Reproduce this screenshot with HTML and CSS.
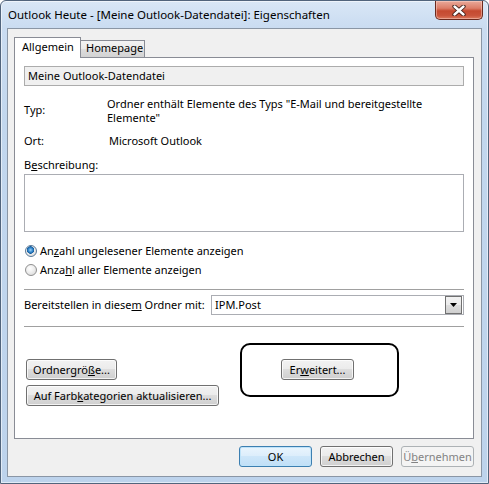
FILE: index.html
```html
<!DOCTYPE html>
<html lang="de">
<head>
<meta charset="utf-8">
<title>Outlook Heute - Eigenschaften</title>
<link rel="stylesheet" href="styles.css">
</head>
<body>
<div class="window">
  <div class="titlebar">
    <div class="title">Outlook Heute - [Meine Outlook-Datendatei]: Eigenschaften</div>
    <div class="close">
      <svg width="14" height="11" viewBox="0 0 14 11">
        <path d="M2.5 1.5 L11.5 9.5 M11.5 1.5 L2.5 9.5" stroke="#3a1a14" stroke-width="4.2" stroke-linecap="round"/>
        <path d="M2.5 1.5 L11.5 9.5 M11.5 1.5 L2.5 9.5" stroke="#ffffff" stroke-width="2.4" stroke-linecap="round"/>
      </svg>
    </div>
  </div>
  <div class="client">
    <div class="tabs">
      <div class="tab active">Allgemein</div>
      <div class="tab inactive">Homepage</div>
    </div>
    <div class="panel">
      <div class="namefield">Meine Outlook-Datendatei</div>
      <div class="inforow typ-row">
        <div class="lbl lbl-typ">Typ:</div>
        <div class="val">Ordner enthält Elemente des Typs "E-Mail und bereitgestellte<br>Elemente"</div>
      </div>
      <div class="inforow ort-row">
        <div class="lbl">Ort:</div>
        <div class="val val-ort">Microsoft Outlook</div>
      </div>
      <div class="desc-label">B<u>e</u>schreibung:</div>
      <div class="textarea"></div>
      <div class="radio-row first"><span class="radio checked"></span>An<u>z</u>ahl ungelesener Elemente anzeigen</div>
      <div class="radio-row second"><span class="radio"></span>Anza<u>h</u>l aller Elemente anzeigen</div>
      <div class="sep sep-1"></div>
      <div class="combo-row">
        <div class="combo-label">Bereitstellen in diese<u>m</u> Ordner mit:</div>
        <div class="combo">
          <span class="combo-text">IPM.Post</span>
          <span class="combo-btn">
            <svg width="7" height="4" viewBox="0 0 7 4"><polygon points="0,0 7,0 3.5,4" fill="#000"/></svg>
          </span>
        </div>
      </div>
      <div class="sep sep-2"></div>
      <div class="actions">
        <div class="action-col">
          <div class="btn btn-size">Ordnergrö<u>ß</u>e...</div>
          <div class="btn btn-color">Auf Farb<u>k</u>ategorien aktualisieren...</div>
        </div>
        <div class="highlight">
          <div class="btn btn-adv">Er<u>w</u>eitert...</div>
        </div>
      </div>
    </div>
    <div class="footer">
      <div class="btn btn-foot default">OK</div>
      <div class="btn btn-foot">Abbrechen</div>
      <div class="btn btn-foot disabled">Ü<u>b</u>ernehmen</div>
    </div>
  </div>
</div>
</body>
</html>
```

FILE: styles.css
```css
* { box-sizing: border-box; }
html, body { margin: 0; padding: 0; }
body {
  width: 489px;
  height: 484px;
  overflow: hidden;
  background: #ffffff;
  font-family: "Noto Sans", "Open Sans", "DejaVu Sans", sans-serif;
  font-size: 11px;
  line-height: 14px;
  color: #000;
}
u { text-decoration: underline; text-underline-offset: 1px; }

.window {
  width: 489px;
  height: 484px;
  border: 1px solid #51647c;
  border-radius: 6px 6px 0 0;
  background: linear-gradient(to bottom, #d9e7f6 0px, #cadcf1 26px, #c2d7ee 120px, #bdd3ec 100%);
  box-shadow: inset 0 0 0 1px rgba(255,255,255,0.55);
  padding: 0 6px 6px 6px;
  display: flex;
  flex-direction: column;
}

.titlebar {
  height: 27px;
  margin: 0 -6px;
  padding: 0 5px 0 7px;
  display: flex;
  justify-content: space-between;
  align-items: flex-start;
}
.title {
  padding-top: 7px;
  font-size: 11.5px;
  color: #000;
  white-space: nowrap;
}
.close {
  width: 48px;
  height: 19px;
  border: 1px solid #6b2a1e;
  border-top: none;
  border-radius: 0 0 5px 5px;
  background: linear-gradient(to bottom, #e9a99a 0%, #dc7d68 40%, #c54a30 55%, #c9533a 80%, #dc7a5e 100%);
  box-shadow: inset 0 0 0 1px rgba(255,220,210,0.45);
  display: flex;
  align-items: center;
  justify-content: center;
}

.client {
  flex: 1;
  border: 1px solid #8a96a5;
  background: #f0f0f0;
  padding: 8px 7px 9px 6px;
  display: flex;
  flex-direction: column;
}

.tabs {
  height: 21px;
  margin-bottom: -1px;
  display: flex;
  align-items: flex-end;
  position: relative;
  z-index: 1;
}
.tab {
  border: 1px solid #898c95;
  white-space: nowrap;
}
.tab.active {
  width: 67px;
  height: 21px;
  border-bottom: none;
  background: #ffffff;
  padding: 2px 0 0 7px;
  position: relative;
  z-index: 2;
}
.tab.inactive {
  width: 65px;
  height: 18px;
  margin-left: -1px;
  padding: 0 0 0 5px;
  background: linear-gradient(to bottom, #f3f3f3 0%, #ebebeb 50%, #dddddd 51%, #d3d3d3 100%);
}

.panel {
  height: 382px;
  border: 1px solid #898c95;
  background: #ffffff;
  padding: 8px 9px 0 9px;
  display: flex;
  flex-direction: column;
}

.namefield {
  height: 20px;
  border: 1px solid #acacac;
  background: #f0f0f0;
  padding-left: 3px;
  line-height: 18px;
}

.inforow { display: flex; }
.typ-row { margin-top: 11px; }
.ort-row { margin-top: 9px; }
.lbl { width: 83px; flex: none; }
.lbl-typ { margin-top: 6px; }
.val-ort { margin-left: 2px; }

.desc-label { margin-top: 10px; }
.textarea {
  margin-top: 2px;
  height: 58px;
  border: 1px solid #abadb3;
  background: #fff;
}

.radio-row {
  height: 14px;
  display: flex;
  align-items: center;
  white-space: nowrap;
}
.radio-row.first { margin-top: 12px; }
.radio-row.second { margin-top: 5px; }
.radio {
  width: 12px;
  height: 12px;
  margin: 0 3px 0 1px;
  border-radius: 50%;
  border: 1px solid #8f8f8f;
  background: radial-gradient(circle at 40% 35%, #ffffff 0%, #f0f0f0 40%, #d4d4d4 100%);
  flex: none;
}
.radio.checked {
  border-color: #5a7a98;
  background:
    radial-gradient(circle at 45% 40%, #9fd1f4 0px, #3a8ed3 2px, #155c9c 3.5px, rgba(21,92,156,0) 4px),
    radial-gradient(circle at 40% 35%, #ffffff 0%, #ececec 50%, #cfcfcf 100%);
}

.sep {
  height: 1px;
  background: #a0a0a0;
}
.sep-1 { margin-top: 12px; }
.sep-2 { margin-top: 11px; }

.combo-row {
  margin-top: 5px;
  height: 20px;
  display: flex;
  align-items: center;
}
.combo-label {
  width: 187px;
  flex: none;
  white-space: nowrap;
}
.combo {
  flex: 1;
  height: 20px;
  border: 1px solid #abadb3;
  background: #fff;
  display: flex;
  align-items: center;
  justify-content: space-between;
  padding-left: 3px;
}
.combo-btn {
  width: 17px;
  height: 18px;
  margin-right: 1px;
  border: 1px solid #707070;
  background: linear-gradient(to bottom, #f2f2f2 0%, #ebebeb 50%, #dddddd 51%, #cfcfcf 100%);
  display: flex;
  align-items: center;
  justify-content: center;
}

.actions {
  display: flex;
  align-items: flex-start;
}
.action-col {
  margin-top: 32px;
  padding-left: 2px;
  display: flex;
  flex-direction: column;
  align-items: flex-start;
  gap: 5px;
}
.highlight {
  margin-top: 16px;
  margin-left: 21px;
  width: 159px;
  height: 54px;
  border: 2px solid #000;
  border-radius: 10px;
  padding: 14px 0 0 39px;
}

.btn {
  height: 21px;
  border: 1px solid #707070;
  border-radius: 3px;
  background: linear-gradient(to bottom, #f2f2f2 0%, #ebebeb 49%, #dddddd 50%, #cfcfcf 100%);
  box-shadow: inset 0 0 0 1px rgba(255,255,255,0.75);
  display: flex;
  align-items: center;
  justify-content: center;
  white-space: nowrap;
}
.btn-size { width: 91px; }
.btn-color { width: 193px; }
.btn-adv { width: 73px; }

.footer {
  margin-top: 7px;
  display: flex;
  justify-content: flex-end;
  gap: 8px;
}
.btn-foot { width: 73px; }
.btn.default {
  border-color: #3c7fb1;
  background: linear-gradient(to bottom, #eaf5fd 0%, #dcedfb 49%, #cde6f9 50%, #c0dff7 100%);
  box-shadow: inset 0 0 0 1px #bfe3f9;
}
.btn.disabled {
  border-color: #adb2b5;
  background: #f4f4f4;
  box-shadow: none;
  color: #838383;
}
```
